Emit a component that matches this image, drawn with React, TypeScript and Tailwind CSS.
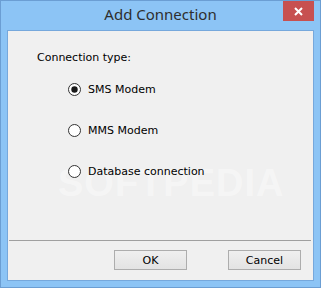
import React from 'react';

const Radio: React.FC<{ checked?: boolean; label: string }> = ({ checked, label }) => (
  <div className="flex items-center gap-[7px] h-[13px]">
    <svg width="13" height="13" viewBox="0 0 13 13" className="shrink-0">
      <circle cx="6.5" cy="6.5" r="6" fill="#ffffff" stroke="#333333" strokeWidth="1" />
      {checked && <circle cx="6.5" cy="6.5" r="3.2" fill="#1a1a1a" />}
    </svg>
    <span className="leading-[13px]">{label}</span>
  </div>
);

const App: React.FC = () => {
  return (
    <div
      className="w-[321px] h-[288px] bg-[#8cc4f5] border border-[#6b9ed3] flex flex-col relative overflow-hidden"
      style={{ fontFamily: '"DejaVu Sans", sans-serif' }}
    >
      {/* title bar */}
      <div className="h-[29px] flex items-center justify-center relative">
        <span
          className="text-[15px] text-[#2e2e2e] leading-none pb-[3px]"
          style={{ fontFamily: '"Noto Sans", "Open Sans", sans-serif' }}
        >
          Add Connection
        </span>
        <div className="absolute right-[6px] top-0 w-[31px] h-[20px] bg-[#c75050] flex items-center justify-center">
          <svg width="9" height="9" viewBox="0 0 9 9">
            <path d="M1 1 L8 8 M8 1 L1 8" stroke="#ffffff" strokeWidth="2" />
          </svg>
        </div>
      </div>

      {/* client area */}
      <div className="flex-1 mx-[6px] mb-[6px] border border-[#76a8dc] bg-[#f0f0f0] flex flex-col text-[11px] text-black relative">
        {/* watermark */}
        <div
          className="absolute left-[50px] top-[124px] text-[38px] font-bold tracking-[1px] text-white/40 pointer-events-none select-none"
          style={{ fontFamily: '"Liberation Sans", sans-serif' }}
        >
          SOFTPEDIA
        </div>

        <div className="pt-[20px] pl-[29px] relative">
          <div className="h-[13px] leading-[13px]">Connection type:</div>
          <div className="ml-[31px] mt-[19px] flex flex-col gap-[28px]">
            <Radio checked label="SMS Modem" />
            <Radio label="MMS Modem" />
            <Radio label="Database connection" />
          </div>
        </div>

        <div className="flex-1" />

        <div className="ml-[1px] mr-[2px] border-t border-[#a0a0a0]" />
        <div className="flex justify-end gap-[41px] pr-[12px] pt-[9px] pb-[10px]">
          <button className="w-[73px] h-[20px] border border-[#adadad] bg-gradient-to-b from-[#efefef] to-[#e3e3e3] text-[11px] leading-none">
            OK
          </button>
          <button className="w-[73px] h-[20px] border border-[#adadad] bg-gradient-to-b from-[#efefef] to-[#e3e3e3] text-[11px] leading-none">
            Cancel
          </button>
        </div>
      </div>
    </div>
  );
};

export default App;
